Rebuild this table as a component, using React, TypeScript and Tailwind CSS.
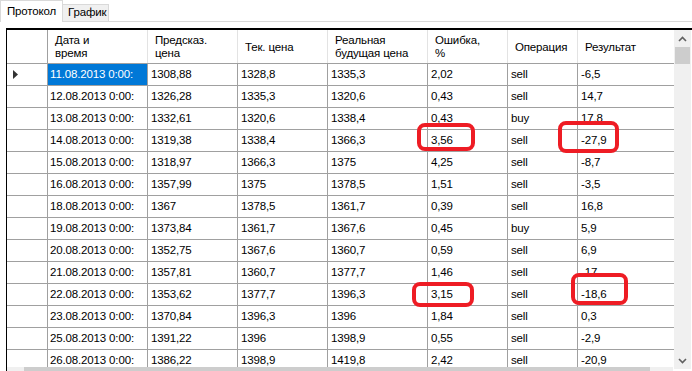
import React from "react";

const rows: string[][] = [
  ["11.08.2013 0:00:", "1308,88", "1328,8", "1335,3", "2,02", "sell", "-6,5"],
  ["12.08.2013 0:00:", "1326,28", "1335,3", "1320,6", "0,43", "sell", "14,7"],
  ["13.08.2013 0:00:", "1332,61", "1320,6", "1338,4", "0,43", "buy", "17,8"],
  ["14.08.2013 0:00:", "1319,38", "1338,4", "1366,3", "3,56", "sell", "-27,9"],
  ["15.08.2013 0:00:", "1318,97", "1366,3", "1375", "4,25", "sell", "-8,7"],
  ["16.08.2013 0:00:", "1357,99", "1375", "1378,5", "1,51", "sell", "-3,5"],
  ["18.08.2013 0:00:", "1367", "1378,5", "1361,7", "0,39", "sell", "16,8"],
  ["19.08.2013 0:00:", "1373,84", "1361,7", "1367,6", "0,45", "buy", "5,9"],
  ["20.08.2013 0:00:", "1352,75", "1367,6", "1360,7", "0,59", "sell", "6,9"],
  ["21.08.2013 0:00:", "1357,81", "1360,7", "1377,7", "1,46", "sell", "-17"],
  ["22.08.2013 0:00:", "1353,62", "1377,7", "1396,3", "3,15", "sell", "-18,6"],
  ["23.08.2013 0:00:", "1370,84", "1396,3", "1396", "1,84", "sell", "0,3"],
  ["25.08.2013 0:00:", "1391,22", "1396", "1398,9", "0,55", "sell", "-2,9"],
  ["26.08.2013 0:00:", "1386,22", "1398,9", "1419,8", "2,42", "sell", "-20,9"],
];

const widths = ["w-[100px]", "w-[90px]", "w-[90px]", "w-[100px]", "w-[80px]", "w-[70px]", "w-[95px]"];
const headers: React.ReactNode[] = [
  <>Дата и<br />время</>,
  <>Предсказ.<br />цена</>,
  <>Тек. цена</>,
  <>Реальная<br />будущая цена</>,
  <>Ошибка,<br />%</>,
  <>Операция</>,
  <>Результат</>,
];

export default function App() {
  return (
    <div
      className="relative w-[692px] h-[371px] overflow-hidden bg-white text-black"
      style={{ fontFamily: '"Liberation Sans", Arial, sans-serif' }}
    >
      {/* Tabs */}
      <div className="flex h-[22px] items-end text-[11.5px] tracking-[-0.15px]">
        <div className="h-[22px] w-[63px] border-l border-t border-r border-[#d9d9d9] bg-white flex items-center pl-[6px] relative z-10">
          Протокол
        </div>
        <div className="h-[18px] w-[46px] border-t border-r border-b border-[#d9d9d9] bg-[#f0f0f0] flex items-center pl-[5px]">
          График
        </div>
        <div className="flex-1 border-b border-[#d9d9d9] h-[1px]" />
      </div>

      {/* Grid */}
      <div className="absolute left-[6px] top-[28px] w-[700px] h-[360px] border-l border-t-2 border-black flex">
        <div className="flex flex-col w-[667px]">
          {/* Header */}
          <div className="flex h-[34px] border-b border-[#a0a0a0] text-[11.5px] leading-[13px] tracking-[-0.15px]">
            <div className="w-[41px] border-r border-[#a0a0a0]" />
            {headers.map((h, i) => (
              <div
                key={i}
                className={`${widths[i]} ${i < 6 ? "border-r border-[#e3e3e3]" : ""} flex items-center pl-[7px] pt-[1px]`}
              >
                <div>{h}</div>
              </div>
            ))}
          </div>
          {rows.map((r, ri) => (
            <div
              key={ri}
              className="flex h-[22px] border-b border-[#a0a0a0] text-[11.5px] tracking-[-0.15px] shrink-0"
            >
              <div className="w-[41px] border-r border-[#a0a0a0] flex items-center pl-[6px]">
                {ri === 0 && (
                  <svg width="5" height="9" viewBox="0 0 5 9">
                    <path d="M0 0 L5 4.5 L0 9 Z" fill="#333" />
                  </svg>
                )}
              </div>
              {r.map((c, ci) => (
                <div
                  key={ci}
                  className={`${widths[ci]} ${ci < 6 ? "border-r border-[#a0a0a0]" : ""} flex items-center ${
                    ci === 0 ? "pl-[2px]" : "pl-[3px]"
                  } ${ri === 0 && ci === 0 ? "bg-[#0078d7] text-white" : ""}`}
                >
                  {c}
                </div>
              ))}
            </div>
          ))}
        </div>
        {/* vertical scrollbar */}
        <div className="w-[17px] h-[339px] bg-[#f0f0f0] flex flex-col items-center">
          <div className="h-[17px] flex items-center justify-center">
            <svg width="9" height="6" viewBox="0 0 9 6">
              <path d="M1 5 L4.5 1.5 L8 5" stroke="#606060" strokeWidth="1.6" fill="none" />
            </svg>
          </div>
          <div className="w-[15px] h-[17px] bg-[#cdcdcd]" />
          <div className="flex-1" />
          <div className="h-[17px] flex items-center justify-center">
            <svg width="9" height="6" viewBox="0 0 9 6">
              <path d="M1 1 L4.5 4.5 L8 1" stroke="#606060" strokeWidth="1.6" fill="none" />
            </svg>
          </div>
        </div>
      </div>

      {/* horizontal scrollbar */}
      <div className="absolute left-[7px] top-[367px] w-[666px] h-[4px] bg-[#f0f0f0]">
        <div className="ml-[17px] w-[626px] h-[4px] bg-[#cdcdcd]" />
      </div>

      {/* red highlights */}
      <div className="absolute left-[417px] top-[123px] w-[58px] h-[28px] border-[4px] border-[#ee1c24] rounded-[8px]" />
      <div className="absolute left-[558px] top-[121px] w-[61px] h-[32px] border-[4px] border-[#ee1c24] rounded-[8px]" />
      <div className="absolute left-[412px] top-[282px] w-[62px] h-[25px] border-[4px] border-[#ee1c24] rounded-[8px]" />
      <div className="absolute left-[571px] top-[273px] w-[57px] h-[32px] border-[4px] border-[#ee1c24] rounded-[8px]" />
    </div>
  );
}
